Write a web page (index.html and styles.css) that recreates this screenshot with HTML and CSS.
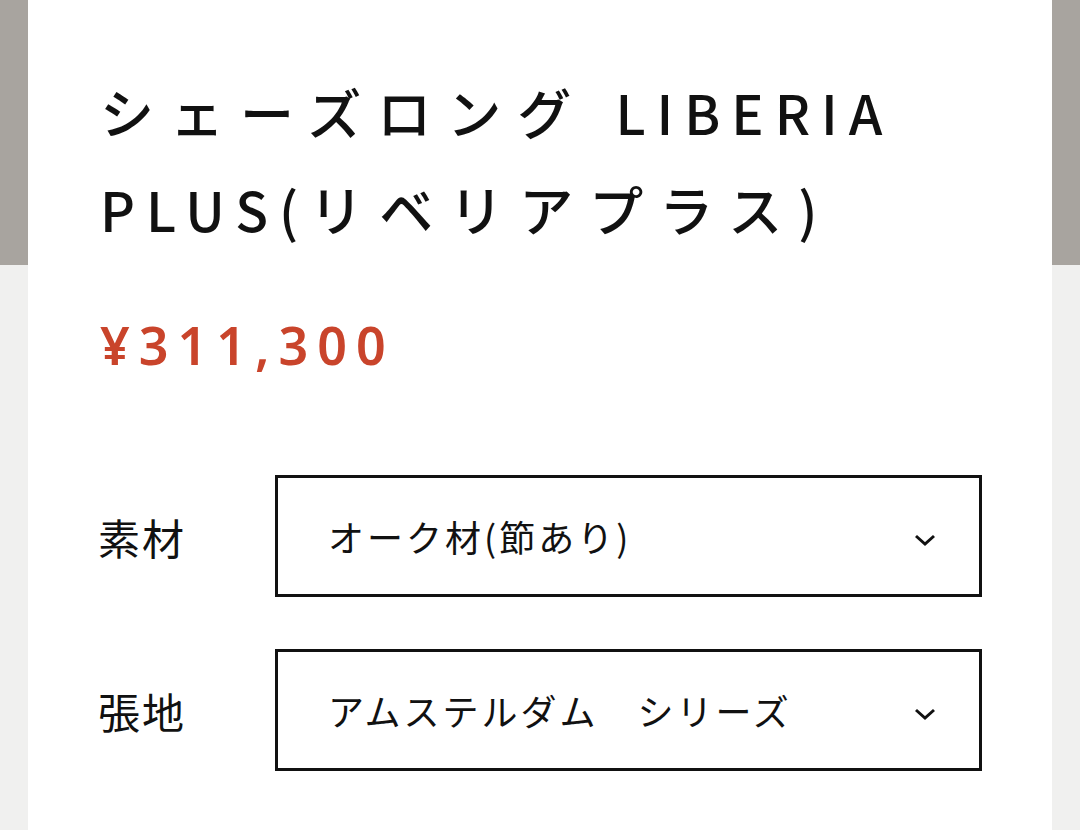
FILE: index.html
```html
<!DOCTYPE html>
<html lang="ja">
  <head>
    <meta charset="UTF-8" />
    <meta name="viewport" content="width=device-width, initial-scale=1.0" />
    <title>シェーズロング LIBERIA PLUS(リベリアプラス)</title>
    <link rel="stylesheet" href="styles.css">
  </head>
  <body>
    <main class="product">
      <h1 class="product-name">シェーズロング <span class="latin">LIBERIA</span> <span class="latin">PLUS(</span>リベリアプラス)</h1>

      <p class="price">¥311,300</p>

      <div class="options">
        <div class="option">
          <span class="option-label">素材</span>
          <div class="select">
            <span class="select-value">オーク材(節あり)</span>
            <svg class="chevron" width="22" height="14" viewBox="0 0 22 14">
              <path d="M2 3 L11 11 L20 3" fill="none" stroke="#111" stroke-width="3" />
            </svg>
          </div>
        </div>
        <div class="option">
          <span class="option-label">張地</span>
          <div class="select">
            <span class="select-value">アムステルダム　シリーズ</span>
            <svg class="chevron" width="22" height="14" viewBox="0 0 22 14">
              <path d="M2 3 L11 11 L20 3" fill="none" stroke="#111" stroke-width="3" />
            </svg>
          </div>
        </div>
      </div>
    </main>
  </body>
</html>
```

FILE: styles.css
```css
html,
body {
  height: 100%;
}
body {
  margin: 0;
  font-family: "Noto Sans CJK JP", "Noto Sans", sans-serif;
  color: #111;
  background: linear-gradient(#a8a49f 0, #a8a49f 265px, #f0f0ef 265px);
}
.product {
  box-sizing: border-box;
  min-height: 100%;
  margin: 0 28px;
  padding: 63px 70px 40px 72px;
  background-color: #fff;
}
.product-name {
  margin: 0;
  font-size: 54px;
  font-weight: 500;
  line-height: 97px;
  letter-spacing: 16px;
}
/* roman letters run a little tighter than the kana */
.product-name .latin {
  letter-spacing: 11px;
}
.price {
  margin: 52px 0 0;
  font-family: "Noto Sans", sans-serif;
  font-size: 52px;
  font-weight: 600;
  line-height: 72px;
  letter-spacing: 9px;
  color: #c9442b;
}
.options {
  display: flex;
  flex-direction: column;
  gap: 52px;
  margin-top: 94px;
}
.option {
  display: grid;
  grid-template-columns: 175px 1fr;
  align-items: center;
}
.option-label {
  font-size: 42px;
  letter-spacing: 2px;
  margin-left: -2px;
}
.select {
  display: flex;
  align-items: center;
  justify-content: space-between;
  height: 122px;
  box-sizing: border-box;
  padding: 0 43px 0 50px;
  border: 3px solid #111;
}
.select-value {
  font-size: 36px;
  letter-spacing: 3px;
}
.chevron {
  margin-top: 8px;
}
```
